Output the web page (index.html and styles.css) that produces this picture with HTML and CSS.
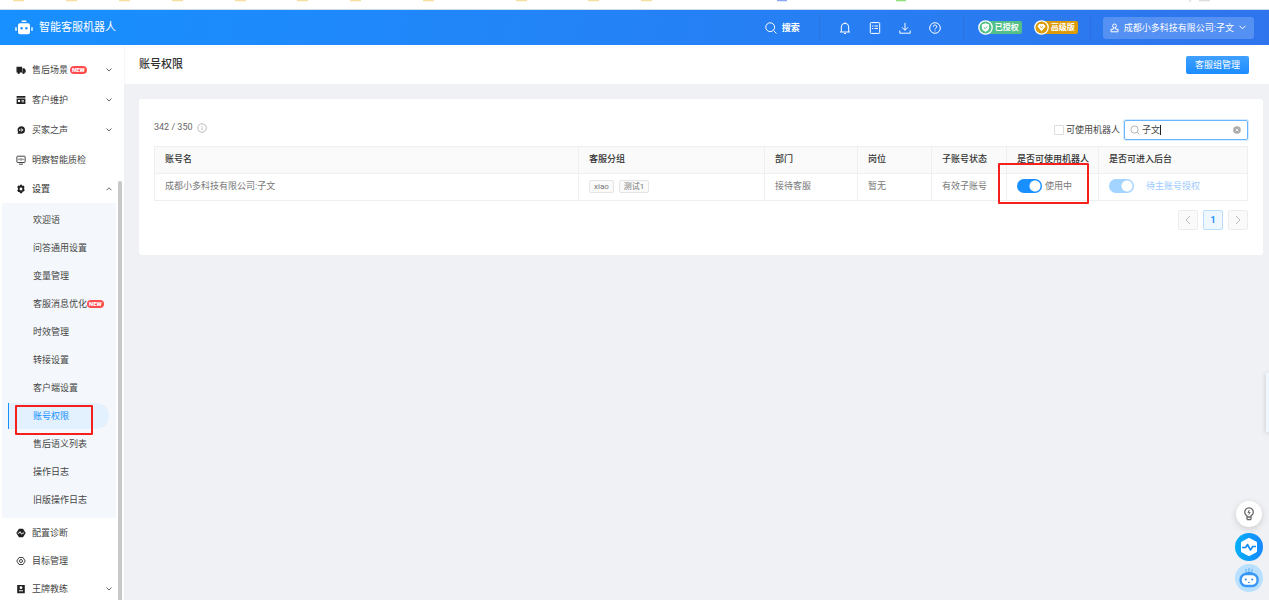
FILE: index.html
```html
<!DOCTYPE html>
<html lang="zh-CN">
<head>
<meta charset="utf-8">
<title>账号权限</title>
<link rel="stylesheet" href="styles.css">
</head>
<body>
<div class="tabstrip">
  <svg width="1269" height="4" viewBox="0 0 1269 4" aria-hidden="true">
    <path d="M13 0h11M66 0h11M119 0h11M172 0h11M235 0h11M297 0h11M350 0h11M423 0h11M516 0h11M588 0h11M641 0h11" stroke="#f6dfa0" stroke-width="2.6"/>
    <path d="M777 0h10" stroke="#8fa8f8" stroke-width="2.6"/>
    <path d="M896 0h10" stroke="#8fe07c" stroke-width="2.6"/>
    <path d="M1199 0h11" stroke="#dedede" stroke-width="2.6"/>
    <path d="M1190 0v2" stroke="#ccc"/>
  </svg>
</div>
<header class="topbar">
  <div class="brand">
    <svg width="18" height="16" viewBox="0 0 18 16" fill="#fff" aria-hidden="true"><rect x="6.500" y="0.500" width="5" height="1.600" rx=".8"/><path fill-rule="evenodd" d="M5 3.200h8a2 2 0 0 1 2 2v7a2 2 0 0 1-2 2H5a2 2 0 0 1-2-2v-7a2 2 0 0 1 2-2zM6.600 7a1.300 1.300 0 1 0 0 2.600 1.300 1.300 0 0 0 0-2.600zm4.800 0a1.300 1.300 0 1 0 0 2.600 1.300 1.300 0 0 0 0-2.600z"/><rect x="0.300" y="7" width="1.400" height="4" rx=".7"/><rect x="16.300" y="7" width="1.400" height="4" rx=".7"/></svg>
    <span>智能客服机器人</span>
  </div>
  <button class="search-btn" type="button">
    <svg width="12" height="12" viewBox="0 0 12 12" class="line" aria-hidden="true"><circle cx="5.200" cy="5.200" r="4.400"/><path d="M8.500 8.500l3 3"/></svg>搜索
  </button>
  <div class="tools">
    <button type="button" aria-label="通知"><svg width="12" height="12" viewBox="0 0 12 12" class="line"><path d="M1 10h10M2.300 10V5a3.700 3.700 0 0 1 7.400 0v5M5 11.500h2M6 .3v1"/></svg></button>
    <button type="button" aria-label="清单"><svg width="12" height="12" viewBox="0 0 12 12" class="line"><rect x="1.300" y=".6" width="9.400" height="10.800" rx=".8"/><path d="M3 4h1.300M5.500 4H9M3 6.500h1.300M5.500 6.500H9"/></svg></button>
    <button type="button" aria-label="下载"><svg width="12" height="12" viewBox="0 0 12 12" class="line"><path d="M6 .8v7.400M3 5.300l3 3 3-3M.8 8.500v2.700h10.400V8.500"/></svg></button>
    <button type="button" aria-label="帮助"><svg width="12" height="12" viewBox="0 0 12 12" class="line"><circle cx="6" cy="6" r="5.300"/><path d="M4.300 4.800a1.700 1.700 0 1 1 2.500 1.400Q6 6.600 6 7.400M6 8.400v1"/></svg></button>
  </div>
  <div class="plans">
    <span class="plan plan-green"><svg width="15" height="15" viewBox="0 0 15 15" aria-hidden="true"><circle cx="7.500" cy="7.500" r="6.700" fill="#52c087" stroke="#fff" stroke-width="1.300"/><path d="M7.500 3.200l3.600 1.300v3q0 2.800-3.600 4.300-3.600-1.500-3.600-4.300v-3z" fill="#fff"/><path d="M5.700 7.300l1.400 1.400 2.300-2.400" fill="none" stroke="#52c087"/></svg><span>已授权</span></span>
    <span class="plan plan-gold"><svg width="15" height="15" viewBox="0 0 15 15" aria-hidden="true"><circle cx="7.500" cy="7.500" r="6.700" fill="#dc9c08" stroke="#fff" stroke-width="1.300"/><path d="M5.200 4h4.600l1.700 2.500-4 4.800-4-4.800z" fill="#fff"/><path d="M6 6.500l1.500 1 1.500-1" fill="none" stroke="#dc9c08"/></svg><span>高级版</span></span>
  </div>
  <button class="user" type="button">
    <svg width="9" height="10" viewBox="0 0 9 10" class="line" aria-hidden="true"><circle cx="4.500" cy="2.900" r="1.900"/><path d="M3.500 4.700L3.200 6.300H1v2.500h7V6.300H5.800L5.500 4.700"/></svg>
    <span>成都小多科技有限公司:子文</span>
    <svg width="7" height="5" viewBox="0 0 7 5" class="line" aria-hidden="true"><path d="M.5 .8l3 3 3-3"/></svg>
  </button>
</header>
<div class="body">
  <nav class="side">
    <a class="item tall" href="#"><svg width="10" height="10" viewBox="0 0 10 10" aria-hidden="true"><path d="M.5 1.800h5.600v5.700H.5zM6.500 3.300h1.800L9.700 5v2.500H6.500z"/><circle cx="2.700" cy="7.800" r="1.200"/><circle cx="7.500" cy="7.800" r="1.200"/></svg><span>售后场景</span><b class="new gap">NEW</b><svg class="chev" width="6" height="4" viewBox="0 0 6 4"><path d="M.5 .5L3 3 5.500 .5"/></svg></a>
    <a class="item tall" href="#"><svg width="10" height="10" viewBox="0 0 10 10" aria-hidden="true"><path fill-rule="evenodd" d="M.6 1h8.800v8H.6zM.6 2.800v.6h8.800v-.6zM2 5v2h2V5zm3.500 0v.7H8V5zm0 1.500v.7H8v-.7z"/></svg><span>客户维护</span><svg class="chev" width="6" height="4" viewBox="0 0 6 4"><path d="M.5 .5L3 3 5.500 .5"/></svg></a>
    <a class="item tall" href="#"><svg width="10" height="10" viewBox="0 0 10 10" aria-hidden="true"><path fill-rule="evenodd" d="M5.200 1.200a3.800 3.800 0 1 1 0 7.600H1.500l.6-1.700A3.800 3.800 0 0 1 5.200 1.200zM3.300 4v2h.8V4zm1.500-.8v3.600h.8V3.200zM6.300 4v2h.8V4z"/></svg><span>买家之声</span><svg class="chev" width="6" height="4" viewBox="0 0 6 4"><path d="M.5 .5L3 3 5.500 .5"/></svg></a>
    <a class="item tall" href="#"><svg width="10" height="10" viewBox="0 0 10 10" class="dark-line" aria-hidden="true"><rect x=".9" y="1.200" width="8.200" height="6.300" rx=".6"/><path d="M3 9.200h4M3 3.700v1.500M5 3v2.600M7 3.700v1.500"/></svg><span>明察智能质检</span></a>
    <a class="item open" href="#"><svg width="10" height="10" viewBox="0 0 10 10" aria-hidden="true"><path fill-rule="evenodd" d="M4 .8h2l.4 1.100 1.200-.3 1 1.700-.6 1.000.1.700.7.900-1 1.700-1.200-.2L6 9.200H4l-.5-1.300-1.300.2-1-1.700.8-.9V4.300l-.8-1 1-1.700 1.300.3zM5 3.600a1.400 1.400 0 1 0 0 2.800 1.400 1.400 0 0 0 0-2.800z"/></svg><span>设置</span><svg class="chev" width="6" height="4" viewBox="0 0 6 4"><path d="M.5 3.300L3 .8l2.500 2.500"/></svg></a>
    <div class="submenu">
      <a href="#">欢迎语</a>
      <a href="#">问答通用设置</a>
      <a href="#">变量管理</a>
      <a href="#">客服消息优化<b class="new">NEW</b></a>
      <a href="#">时效管理</a>
      <a href="#">转接设置</a>
      <a href="#">客户端设置</a>
      <a class="active" href="#" aria-current="page">账号权限<i class="mark mark-menu"></i></a>
      <a href="#">售后语义列表</a>
      <a href="#">操作日志</a>
      <a href="#">旧版操作日志</a>
    </div>
    <a class="item" href="#"><svg width="10" height="10" viewBox="0 0 10 10" aria-hidden="true"><path d="M3 .8h4L9.700 5 7 9.200H3L.3 5z"/><path d="M1.800 5.200h1.300l1-1.500 1.500 2.600 1-1.300h1.500" fill="none" stroke="#fff" stroke-width=".9"/></svg><span>配置诊断</span></a>
    <a class="item" href="#"><svg width="10" height="10" viewBox="0 0 10 10" class="dark-line" aria-hidden="true"><path d="M3 1.500h4L9.200 5 7 8.500H3L.8 5z"/><circle cx="5" cy="5" r="1.500"/></svg><span>目标管理</span></a>
    <a class="item" href="#"><svg width="10" height="10" viewBox="0 0 10 10" aria-hidden="true"><path fill-rule="evenodd" d="M1.200 1h7.600v8.200H1.200zM5 2.300a1.400 1.400 0 1 0 0 2.800 1.400 1.400 0 0 0 0-2.800zM3 7.200h4v-.9H3z"/></svg><span>王牌教练</span><svg class="chev" width="6" height="4" viewBox="0 0 6 4"><path d="M.5 .5L3 3 5.500 .5"/></svg></a>
    <i class="thumb"></i>
  </nav>
  <main class="main">
    <div class="page-head">
      <h1>账号权限</h1>
      <button class="primary" type="button">客服组管理</button>
    </div>
    <section class="card">
      <div class="filters">
        <span class="count">342 / 350</span>
        <svg width="10" height="10" viewBox="0 0 10 10" fill="none" stroke="#b5b5b5" stroke-width=".9" aria-hidden="true"><circle cx="5" cy="5" r="4.300"/><path d="M5 2.500v1M5 4.400v3.100"/></svg>
        <label class="check"><input type="checkbox">可使用机器人</label>
        <div class="search">
          <svg width="10" height="10" viewBox="0 0 10 10" fill="none" stroke="#aaa" stroke-width=".9" aria-hidden="true"><circle cx="4.500" cy="4.500" r="3.600"/><path d="M7.200 7.200l2.300 2.300"/></svg>
          <span class="field"><input type="text" value="子文" aria-label="搜索账号"><i class="caret"></i></span>
          <button type="button" aria-label="清除"><svg width="8" height="8" viewBox="0 0 8 8"><circle cx="4" cy="4" r="3.800" fill="#aaa"/><path d="M2.700 2.700l2.600 2.600M5.300 2.700L2.700 5.300" stroke="#fff" stroke-width=".8"/></svg></button>
        </div>
      </div>
      <table class="grid">
        <colgroup><col><col class="c-group"><col class="c-dept"><col class="c-post"><col class="c-state"><col class="c-use"><col class="c-admin"></colgroup>
        <thead><tr><th>账号名</th><th>客服分组</th><th>部门</th><th>岗位</th><th>子账号状态</th><th>是否可使用机器人</th><th>是否可进入后台</th></tr></thead>
        <tbody><tr>
          <td>成都小多科技有限公司:子文</td>
          <td><div class="tags"><span>xiao</span><span>测试1</span></div></td>
          <td>接待客服</td><td>暂无</td><td>有效子账号</td>
          <td class="anchor"><label class="toggle"><input type="checkbox" checked>使用中</label><i class="mark mark-switch"></i></td>
          <td><label class="toggle off"><input type="checkbox" checked disabled>待主账号授权</label></td>
        </tr></tbody>
      </table>
      <div class="pager">
        <button type="button" disabled aria-label="上一页"><svg width="6" height="10" viewBox="0 0 6 10"><path d="M5 1L1 5l4 4"/></svg></button>
        <button type="button" class="current">1</button>
        <button type="button" disabled aria-label="下一页"><svg width="6" height="10" viewBox="0 0 6 10"><path d="M1 1l4 4-4 4"/></svg></button>
      </div>
    </section>
  </main>
</div>
<div class="drawer"></div>
<div class="floats">
  <button type="button" class="tip" aria-label="建议"><svg width="12" height="14" viewBox="0 0 12 14" fill="none" stroke="#666" stroke-width="1.300"><path d="M4 10V8.900A4.300 4.300 0 1 1 8 8.900V10zM4 12.600h4M4 10v2.500M8 10v2.500"/><path d="M6.500 3L4.900 5.400h2.200L5.700 7.600" stroke-width="1"/></svg></button>
  <button type="button" class="pulse" aria-label="诊断"><svg width="28" height="28" viewBox="0 0 28 28"><path d="M14 6l7 3.700v8.600L14 22l-7-3.700V9.700z" fill="#fff" stroke="#fff" stroke-width="2" stroke-linejoin="round"/><path d="M7 14.500h3.500l2-3 3 5.500 2.200-3.500H21" fill="none" stroke="#128df5" stroke-width="1.600" stroke-linejoin="round"/></svg></button>
  <button type="button" class="bot" aria-label="机器人助手"><svg width="28" height="28" viewBox="0 0 28 28"><path d="M14 10V4M11 9V5M17 9V5" fill="none" stroke="#6ab6f7" stroke-width="1.200"/><path d="M8.500 10.500Q14 5 19.500 10.500" fill="#3998f5"/><rect x="5.600" y="10" width="17" height="12" rx="5.500" fill="#fff" stroke="#3998f5" stroke-width="2.400"/><circle cx="10.800" cy="15.500" r="1" fill="#2f86e8"/><circle cx="17.200" cy="15.500" r="1" fill="#2f86e8"/><path d="M13.200 18.500h1.600" stroke="#2f86e8"/></svg></button>
</div>
</body>
</html>
```
FILE: styles.css
```css
* { box-sizing: border-box; }
body {
  margin: 0;
  height: 100vh;
  display: flex;
  flex-direction: column;
  overflow: hidden;
  background: #eff1f5;
  color: #444;
  font: 9px/14px Roboto, "Noto Sans CJK SC", sans-serif;
}
svg { display: block; flex: none; }
a { color: inherit; text-decoration: none; }
button { margin: 0; padding: 0; border: 0; background: none; font: inherit; color: inherit; }
.line { fill: none; stroke: #fff; stroke-width: 1; }

.tabstrip { height: 10px; flex: none; overflow: hidden; background: #fff; border-bottom: 1px solid #cbdcf2; }

.topbar {
  flex: none;
  height: 35px;
  display: flex;
  align-items: center;
  padding: 0 15px;
  color: #fff;
  background: linear-gradient(100deg, #1890ff, #2f74ec);
}
.brand { display: flex; align-items: center; gap: 6px; margin-right: auto; font-size: 11px; }
.search-btn { display: flex; align-items: center; gap: 5px; padding-right: 19px; font-weight: 700; }
.tools { display: flex; gap: 18px; padding: 0 22px 0 19px; height: 25px; align-items: center; border: solid #2b74e0; border-width: 0 1px; }
.plans { display: flex; gap: 12px; padding: 0 12px 0 14px; height: 25px; align-items: center; border-right: 1px solid #2b6ee0; margin-right: 12px; }
.plan { display: flex; align-items: center; font-weight: 700; font-size: 8px; line-height: 13px; }
.plan svg { z-index: 1; }
.plan span { margin-left: -8px; padding: 0 3px 0 10px; border-radius: 2px; }
.plan-green span { background: #52c087; }
.plan-gold span { background: #dc9c08; }
.user { display: flex; align-items: center; gap: 5px; height: 22px; padding: 0 8px 0 7px; border-radius: 3px; background: #5590f3; }

.body { flex: 1; min-height: 0; display: flex; }
.side { position: relative; width: 124px; flex: none; overflow: hidden; padding-top: 10px; background: #fff; color: #444; }
.item { display: flex; align-items: center; height: 28px; padding: 0 12px 0 16px; }
.item.tall { height: 30px; }
.item span { margin-left: 6px; }
.item svg { fill: #222; }
.item .dark-line { fill: none; stroke: #444; stroke-width: 1; }
.item .chev { margin-left: auto; fill: none; stroke: #666; }
.open { font-weight: 500; }
.new { padding: 0 2px; border-radius: 4px; background: #ff4d4f; color: #fff; font-size: 6px; line-height: 8px; font-weight: 900; }
.new.gap { margin-left: 2px; }
.submenu { margin: 0 8px 1px 2px; padding: 3px 0 4px; background: #f4f8fc; }
.submenu a { position: relative; display: flex; align-items: center; height: 28px; padding-left: 31px; }
.submenu .active { height: 26px; margin: 1px 7px 1px 6px; padding-left: 24px; border-left: 1px solid #1890ff; border-radius: 0 13px 13px 0; background: #e3f0fe; color: #1890ff; }
.side .thumb { position: absolute; right: 2px; top: 136px; bottom: 0; width: 4px; border-radius: 2px 2px 0 0; background: #c8c8c8; }
.mark { position: absolute; border: 2px solid #f5201b; border-radius: 1px; pointer-events: none; }
.mark-menu { left: 6px; top: 2px; width: 78px; height: 30px; z-index: 1; }
.mark-switch { left: -9px; top: -11px; width: 91px; height: 41px; }

.main { flex: 1; min-width: 0; }
.page-head { display: flex; align-items: center; justify-content: space-between; height: 39px; padding: 0 20px 0 14px; background: #fff; border-left: 1px solid #f4f5f8; }
h1 { margin: 0; font-size: 11px; line-height: 16px; font-weight: 500; color: #333; }
.primary { width: 63px; height: 18px; border-radius: 2px; background: linear-gradient(#40a0ff, #1b8cff); color: #fff; }
.card { margin: 15px 6px 0 15px; padding: 21px 15px 25px; border-radius: 3px; background: #fff; }
.filters { display: flex; align-items: center; height: 20px; margin-bottom: 6px; }
.count { margin: 0 4px 6px 0; color: #666; }
.count + svg { margin-bottom: 5px; }
.check { display: flex; align-items: center; gap: 2px; margin-left: auto; margin-right: 4px; }
.check input { appearance: none; width: 10px; height: 10px; margin: 0; border: 1px solid #ddd; border-radius: 1px; background: #fff; }
.search { display: flex; align-items: center; width: 124px; height: 20px; padding: 0 6px 0 5px; border: 1px solid #69b6ff; border-radius: 2px; box-shadow: 0 0 0 1px #d6ebff; }
.field { position: relative; flex: 1; min-width: 0; margin-left: 2px; }
.field input { display: block; width: 100%; padding: 0; border: 0; outline: 0; background: none; font: inherit; color: #444; }
.caret { position: absolute; left: 18px; top: 2px; width: 1px; height: 10px; background: #222; }

.grid { width: 100%; table-layout: fixed; border-collapse: collapse; }
.grid th, .grid td { height: 27px; padding: 0 0 2px 10px; border: 1px solid #efefef; text-align: left; white-space: nowrap; }
.grid th { background: #fafafa; color: #333; font-weight: 500; }
.grid td { color: #777; }
.c-group { width: 186px; }
.c-dept { width: 93px; }
.c-post { width: 74px; }
.c-state { width: 75px; }
.c-use { width: 92px; }
.c-admin { width: 149px; }
.tags { display: flex; gap: 5px; }
.tags span { padding: 0 4px; border: 1px solid #e5e5e5; border-radius: 2px; background: #fafafa; font-size: 8px; line-height: 11px; }
.anchor { position: relative; }
.toggle { display: flex; align-items: center; gap: 3px; }
.toggle input { appearance: none; width: 25px; height: 14px; margin: 0; border-radius: 7px; background: radial-gradient(circle at 18px 7px, #fff 5px, #1890ff 6px); }
.toggle.off { gap: 12px; color: #9ccaff; }
.toggle.off input { background: radial-gradient(circle at 18px 7px, #fff 5px, #a3d3ff 6px); }
.pager { display: flex; justify-content: flex-end; gap: 5px; margin-top: 9px; }
.pager button { display: grid; place-items: center; width: 20px; height: 20px; border: 1px solid #ededed; border-radius: 2px; background: #fafafa; }
.pager path { fill: none; stroke: #bbb; }
.pager .current { border-color: #b9dcff; background: #f0f8ff; color: #1890ff; font-weight: 700; }

.drawer { position: fixed; right: 0; top: 373px; width: 3px; height: 59px; background: #f0f7ff; box-shadow: 0 1px 5px #bbb; }
.floats { position: fixed; right: 6px; bottom: 8px; display: flex; flex-direction: column; align-items: center; }
.floats button { display: grid; place-items: center; width: 28px; height: 28px; border-radius: 50%; }
.floats .tip { width: 26px; height: 26px; margin-bottom: 6px; background: #fff; box-shadow: 0 2px 6px #ccc; }
.floats .pulse { margin-bottom: 3px; background: linear-gradient(90deg, #06b0f8, #1688ff); }
.floats .bot { background: #b9e1ff; }
```
